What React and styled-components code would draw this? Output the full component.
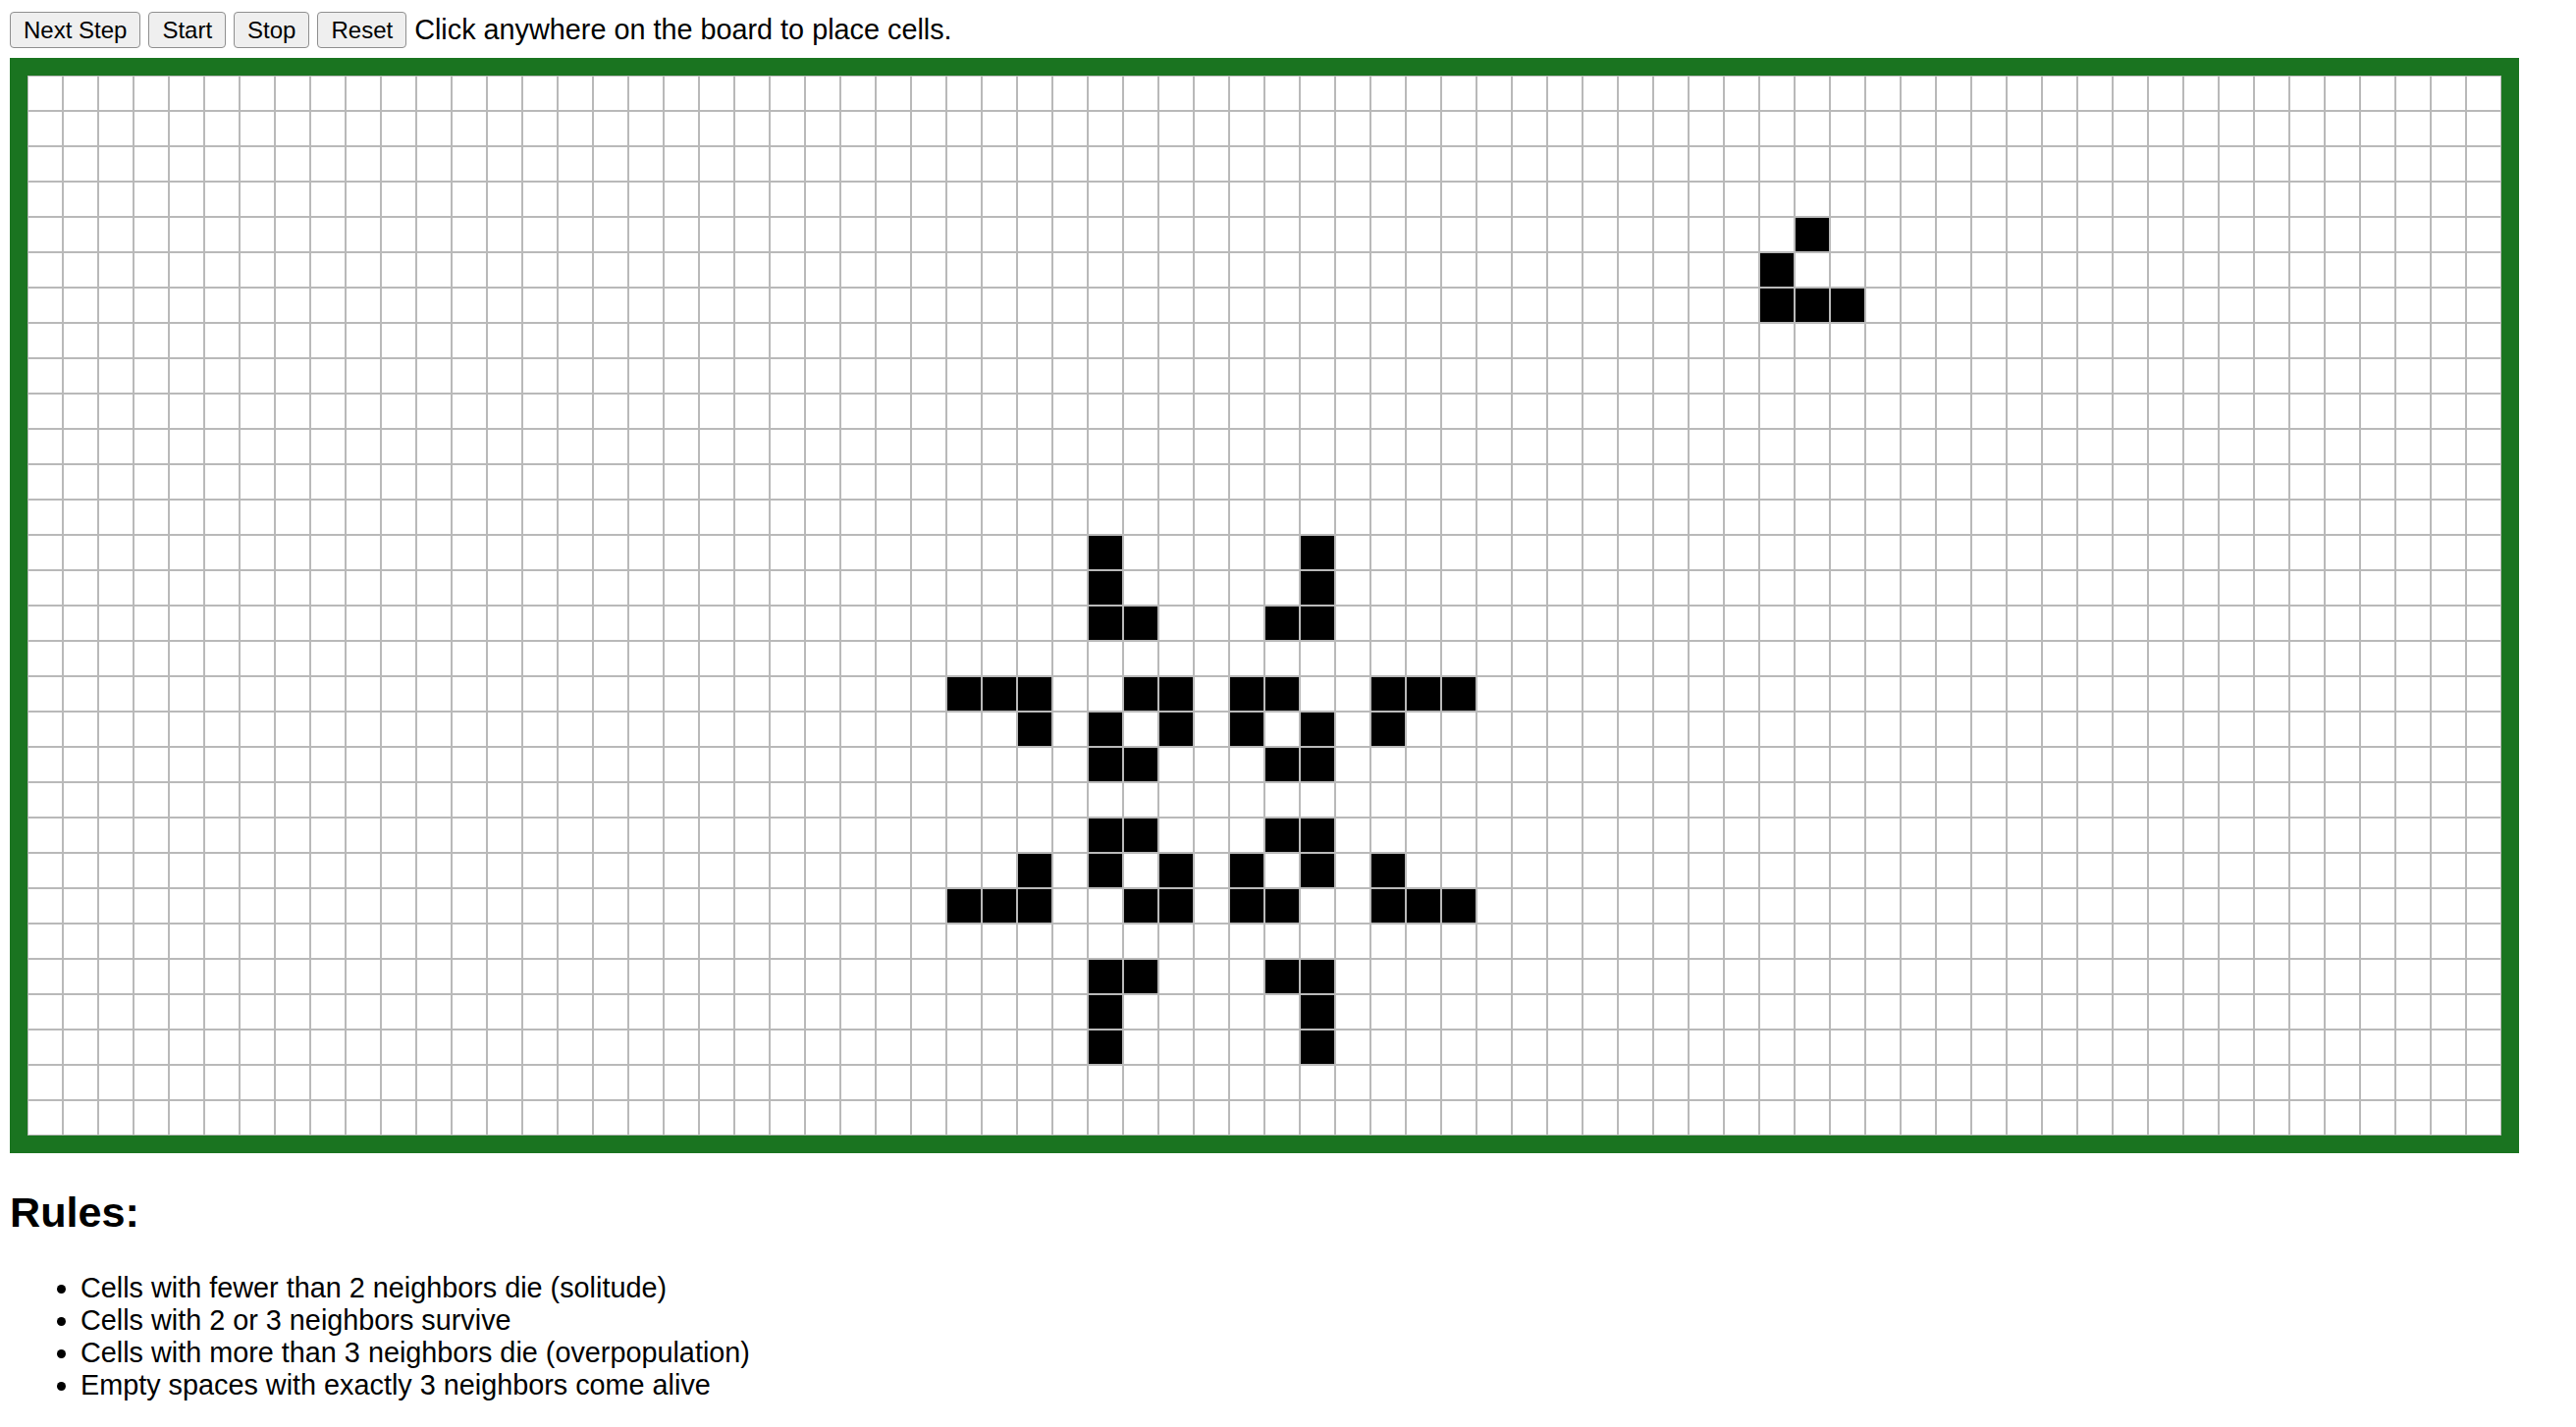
import React, { useEffect, useRef, useState } from "react";
import styled, { createGlobalStyle } from "styled-components";

const ROWS = 30;
const COLS = 70;

// starting pattern: a glider up top and a pulsar in the middle
const GLIDER = [
  [4, 50],
  [5, 49],
  [6, 49],
  [6, 50],
  [6, 51],
];
const PULSAR_ROWS = {
  0: [4, 10],
  1: [4, 10],
  2: [4, 5, 9, 10],
  4: [0, 1, 2, 5, 6, 8, 9, 12, 13, 14],
  5: [2, 4, 6, 8, 10, 12],
  6: [4, 5, 9, 10],
  8: [4, 5, 9, 10],
  9: [2, 4, 6, 8, 10, 12],
  10: [0, 1, 2, 5, 6, 8, 9, 12, 13, 14],
  12: [4, 5, 9, 10],
  13: [4, 10],
  14: [4, 10],
};

const emptyBoard = () =>
  Array.from({ length: ROWS }, () => Array(COLS).fill(false));

const startBoard = () => {
  const board = emptyBoard();
  GLIDER.forEach(([r, c]) => (board[r][c] = true));
  Object.keys(PULSAR_ROWS).forEach((i) => {
    PULSAR_ROWS[i].forEach((j) => (board[13 + Number(i)][26 + j] = true));
  });
  return board;
};

const nextBoard = (board) =>
  board.map((row, r) =>
    row.map((alive, c) => {
      let n = 0;
      for (let dr = -1; dr <= 1; dr++) {
        for (let dc = -1; dc <= 1; dc++) {
          if (!dr && !dc) continue;
          const rr = r + dr;
          const cc = c + dc;
          if (rr >= 0 && rr < ROWS && cc >= 0 && cc < COLS && board[rr][cc]) n++;
        }
      }
      return alive ? n === 2 || n === 3 : n === 3;
    })
  );

const GlobalStyle = createGlobalStyle`
  body {
    margin: 10px;
    font-family: "Liberation Sans", Arial, Helvetica, sans-serif;
    font-size: 28.8px;
    color: #000;
    background: #fff;
  }
`;

const Toolbar = styled.div`
  display: flex;
  align-items: center;
  gap: 8px;
  height: 41px;
`;
const Button = styled.button`
  height: 37px;
  padding: 0 13px;
  font-family: "Liberation Sans", Arial, sans-serif;
  font-size: 24px;
  color: #000;
  background: #efefef;
  border: 1px solid #8f8f8f;
  border-radius: 4px;
  cursor: pointer;
  &:hover {
    background: #e5e5e5;
  }
`;
const Hint = styled.span`
  font-size: 28.8px;
`;
const Board = styled.div`
  display: grid;
  grid-template-columns: repeat(${COLS}, 36px);
  grid-auto-rows: 36px;
  width: max-content;
  margin-top: 8px;
  border: 18px solid #1a7420;
  background: #fff;
`;
const Cell = styled.div`
  box-sizing: border-box;
  border: 1px solid #b9b9b9;
  background: ${(p) => (p.$alive ? "#000" : "#fff")};
`;
const Title = styled.h2`
  margin: 36px 0;
  font-size: 43.2px;
  font-weight: bold;
`;
const Rules = styled.ul`
  margin: 0;
  padding-left: 72px;
  font-size: 28.8px;
`;

const App = () => {
  const [board, setBoard] = useState(startBoard);
  const [running, setRunning] = useState(false);
  const timer = useRef(null);

  useEffect(() => {
    if (!running) return;
    timer.current = setInterval(() => setBoard((b) => nextBoard(b)), 200);
    return () => clearInterval(timer.current);
  }, [running]);

  const toggle = (r, c) =>
    setBoard((b) =>
      b.map((row, i) => (i === r ? row.map((v, j) => (j === c ? !v : v)) : row))
    );

  return (
    <>
      <GlobalStyle />
      <Toolbar>
        <Button onClick={() => setBoard((b) => nextBoard(b))}>Next Step</Button>
        <Button onClick={() => setRunning(true)}>Start</Button>
        <Button onClick={() => setRunning(false)}>Stop</Button>
        <Button
          onClick={() => {
            setRunning(false);
            setBoard(emptyBoard());
          }}
        >
          Reset
        </Button>
        <Hint>Click anywhere on the board to place cells.</Hint>
      </Toolbar>
      <Board>
        {board.map((row, r) =>
          row.map((alive, c) => (
            <Cell key={r + "-" + c} $alive={alive} onClick={() => toggle(r, c)} />
          ))
        )}
      </Board>
      <Title>Rules:</Title>
      <Rules>
        <li>Cells with fewer than 2 neighbors die (solitude)</li>
        <li>Cells with 2 or 3 neighbors survive</li>
        <li>Cells with more than 3 neighbors die (overpopulation)</li>
        <li>Empty spaces with exactly 3 neighbors come alive</li>
      </Rules>
    </>
  );
};

export default App;
